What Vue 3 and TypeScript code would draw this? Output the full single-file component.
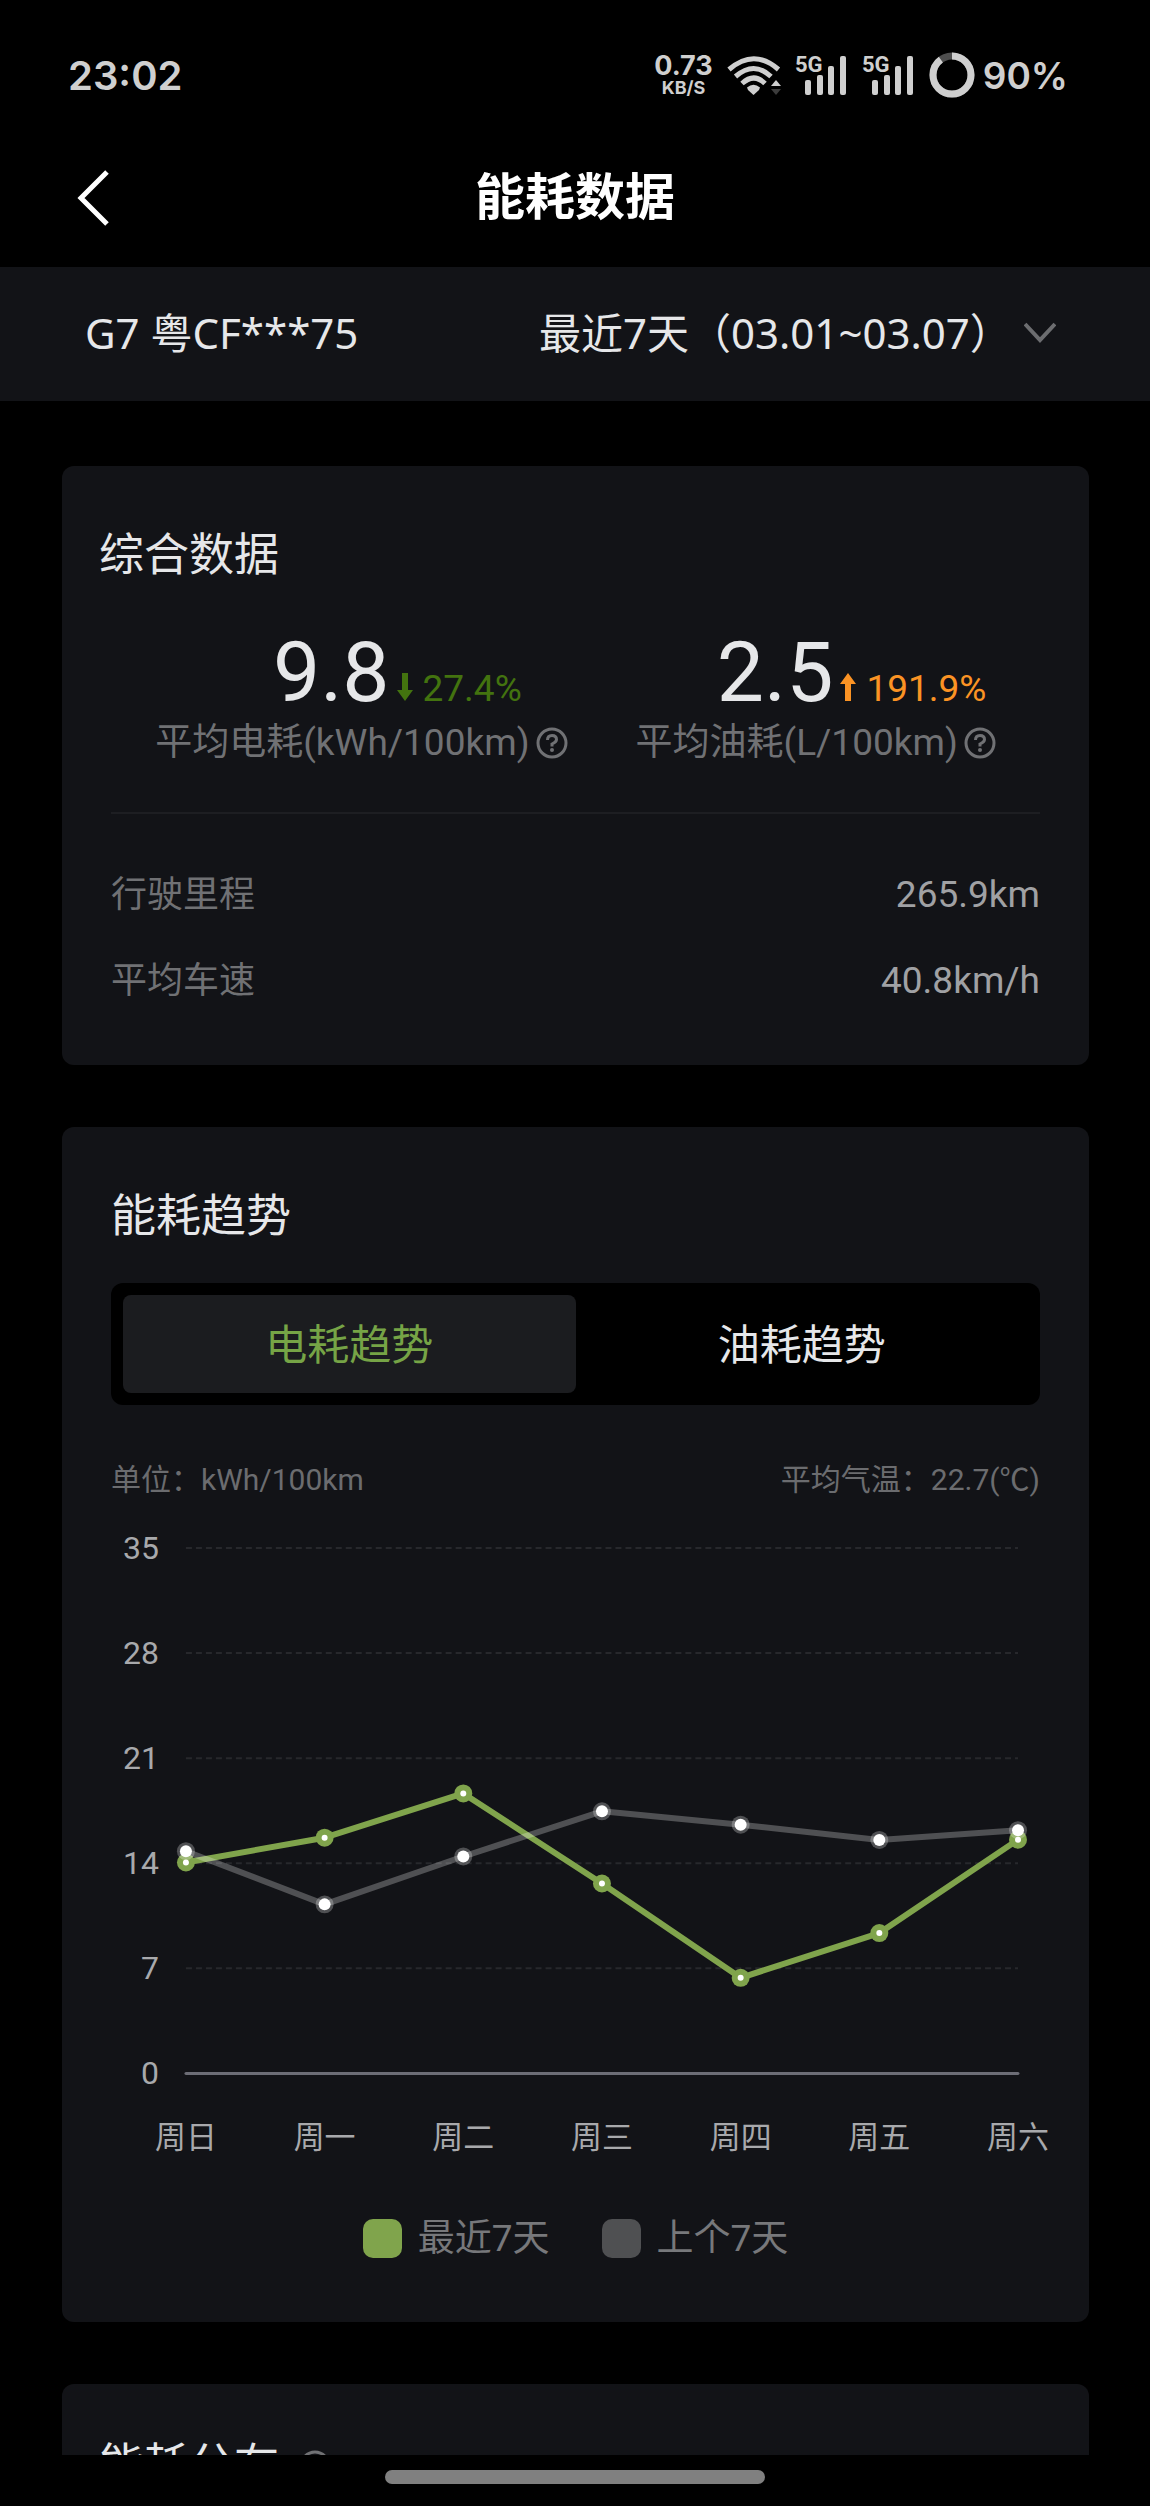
<script setup lang="ts">
import { computed, ref } from 'vue'

interface Series {
  name: string
  kind: 'current' | 'previous'
  values: number[]
}

const ranges = ['最近7天（03.01~03.07）']
const range = ref(ranges[0])

const metrics = [
  { value: '9.8', delta: '27.4%', trend: 'down', label: '平均电耗(kWh/100km)' },
  { value: '2.5', delta: '191.9%', trend: 'up', label: '平均油耗(L/100km)' },
]

const facts = [
  { label: '行驶里程', value: '265.9km' },
  { label: '平均车速', value: '40.8km/h' },
]

const tabs = ['电耗趋势', '油耗趋势']
const activeTab = ref(0)

const days = ['周日', '周一', '周二', '周三', '周四', '周五', '周六']
const ticks = [35, 28, 21, 14, 7, 0]
const series: Series[] = [
  { name: '最近7天', kind: 'current', values: [14.05, 15.7, 18.65, 12.65, 6.37, 9.35, 15.57] },
  { name: '上个7天', kind: 'previous', values: [14.8, 11.26, 14.45, 17.46, 16.57, 15.55, 16.2] },
]

const plot = { left: 75, right: 908, top: 18, bottom: 544, max: 35 }

const xAt = (i: number) => plot.left + ((plot.right - plot.left) * i) / (days.length - 1)
const yAt = (v: number) => plot.bottom - ((plot.bottom - plot.top) * v) / plot.max

const lines = computed(() =>
  series.map((s) => {
    const points = s.values.map((v, i) => ({ x: xAt(i), y: yAt(v) }))
    return { ...s, points, path: points.map((p) => `${p.x},${p.y}`).join(' ') }
  }),
)
</script>

<template>
  <div class="app">
    <div class="status">
      <span class="clock">23:02</span>
      <div class="indicators">
        <span class="speed"><b>0.73</b><small>KB/S</small></span>
        <svg class="wifi" width="54" height="40" viewBox="0 0 54 40" aria-hidden="true">
          <g fill="none" stroke="#cfcfcf" stroke-width="5">
            <path d="M2 14.5 Q27 -7 51.500 14.500" />
            <path d="M8.500 21.500 Q27 5.500 44 21.500" />
            <path d="M15 28.500 Q27 17.500 38 28.500" />
          </g>
          <path d="M20 32.500 Q26.500 27 33 32.500 L32 35 L26.500 40 L21 35 Z" fill="#cfcfcf" />
          <path d="M44 31 L49 25 L54 31 Z" fill="#cfcfcf" />
          <path d="M44 34 L54 34 L49 40 Z" fill="#3c3c3c" />
        </svg>
        <svg v-for="n in 2" :key="n" class="signal" width="52" height="40" viewBox="0 0 52 40" aria-hidden="true">
          <text x="0" y="17" class="net">5G</text>
          <g fill="#cfcfcf">
            <rect x="10" y="25" width="6" height="15" rx="2" />
            <rect x="22" y="20" width="6" height="20" rx="2" />
            <rect x="33" y="11" width="6" height="29" rx="2" />
            <rect x="45" y="1" width="6" height="39" rx="2" />
          </g>
        </svg>
        <svg class="ring" width="46" height="46" viewBox="0 0 46 46" aria-hidden="true">
          <circle cx="23" cy="23" r="19" fill="none" stroke="#4e4e4e" stroke-width="7" />
          <circle
            cx="23" cy="23" r="19" fill="none" stroke="#cfcfcf" stroke-width="7"
            pathLength="100" stroke-dasharray="90 10" transform="rotate(-90 23 23)"
          />
        </svg>
        <span class="battery">90%</span>
      </div>
    </div>

    <header class="nav">
      <button class="back" type="button" aria-label="返回">
        <svg width="36" height="56" viewBox="0 0 36 56" aria-hidden="true">
          <path d="M31 2 L5 28 L31 54" fill="none" stroke="#fff" stroke-width="5" />
        </svg>
      </button>
      <h1>能耗数据</h1>
    </header>

    <div class="filter">
      <span>G7 粤CF***75</span>
      <div class="range">
        <select v-model="range" aria-label="时间范围">
          <option v-for="r in ranges" :key="r">{{ r }}</option>
        </select>
        <svg width="32" height="22" viewBox="0 0 32 22" aria-hidden="true">
          <path d="M1 2 L16 18 L31 2" fill="none" stroke="#6c6d70" stroke-width="4" />
        </svg>
      </div>
    </div>

    <main class="content">
      <section class="card summary">
        <h2>综合数据</h2>
        <div class="metrics">
          <div v-for="m in metrics" :key="m.label" class="metric">
            <div class="figure">
              <span class="value">{{ m.value }}</span>
              <span class="delta" :class="m.trend">
                <svg width="16" height="28" viewBox="0 0 16 28" aria-hidden="true">
                  <path v-if="m.trend === 'down'" d="M5 0H11V17H16L8 28L0 17H5Z" fill="currentColor" />
                  <path v-else d="M5 28H11V11H16L8 0L0 11H5Z" fill="currentColor" />
                </svg>
                {{ m.delta }}
              </span>
            </div>
            <div class="caption">
              <span>{{ m.label }}</span>
              <button class="help" type="button" aria-label="说明">
                <svg width="32" height="32" viewBox="0 0 32 32" aria-hidden="true">
                  <circle cx="16" cy="16" r="14" fill="none" stroke="currentColor" stroke-width="3" />
                  <path d="M11.500 13 Q11.500 8.500 16 8.500 Q20.500 8.500 20.500 12.500 Q20.500 15 16 17 V19.500" fill="none" stroke="currentColor" stroke-width="3" />
                  <circle cx="16" cy="23" r="2" fill="currentColor" />
                </svg>
              </button>
            </div>
          </div>
        </div>
        <dl class="facts">
          <div v-for="f in facts" :key="f.label">
            <dt>{{ f.label }}</dt>
            <dd>{{ f.value }}</dd>
          </div>
        </dl>
      </section>

      <section class="card trend">
        <h2>能耗趋势</h2>
        <div class="tabs" role="tablist">
          <button
            v-for="(t, i) in tabs" :key="t" type="button" role="tab"
            :aria-selected="activeTab === i" :class="{ active: activeTab === i }"
            @click="activeTab = i"
          >{{ t }}</button>
        </div>
        <div class="meta">
          <span>单位：kWh/100km</span>
          <span>平均气温：22.7(℃)</span>
        </div>
        <svg class="chart" viewBox="0 0 930 640" role="img" aria-label="电耗趋势">
          <g v-for="t in ticks" :key="t">
            <text class="axis tick" x="48" :y="yAt(t) + 11">{{ t }}</text>
            <line
              :class="t === 0 ? 'base' : 'grid'"
              :x1="plot.left" :x2="plot.right" :y1="yAt(t)" :y2="yAt(t)"
            />
          </g>
          <g v-for="l in lines" :key="l.name" :class="l.kind">
            <polyline :points="l.path" />
            <template v-for="(p, i) in l.points" :key="i">
              <circle class="halo" :cx="p.x" :cy="p.y" r="9" />
              <circle class="dot" :cx="p.x" :cy="p.y" />
            </template>
          </g>
          <text v-for="(d, i) in days" :key="d" class="axis day" :x="xAt(i)" y="619">{{ d }}</text>
        </svg>
        <ul class="legend">
          <li v-for="s in series" :key="s.name">
            <i :class="s.kind"></i><span>{{ s.name }}</span>
          </li>
        </ul>
      </section>

      <section class="card split">
        <h2>
          能耗分布
          <button class="help" type="button" aria-label="说明">
            <svg width="32" height="32" viewBox="0 0 32 32" aria-hidden="true">
              <circle cx="16" cy="16" r="14" fill="none" stroke="currentColor" stroke-width="3" />
              <path d="M11.500 13 Q11.500 8.500 16 8.500 Q20.500 8.500 20.500 12.500 Q20.500 15 16 17 V19.500" fill="none" stroke="currentColor" stroke-width="3" />
              <circle cx="16" cy="23" r="2" fill="currentColor" />
            </svg>
          </button>
        </h2>
      </section>
    </main>

    <footer class="home"><span></span></footer>
  </div>
</template>

<style>
body {
  margin: 0;
  background: #000;
}
</style>

<style scoped>
.app {
  display: flex;
  flex-direction: column;
  height: 100vh;
  background: #000;
  color: #e6e7e9;
  font-family: Roboto, "Noto Sans CJK SC", sans-serif;
}

button,
select {
  margin: 0;
  padding: 0;
  border: 0;
  background: none;
  color: inherit;
  font: inherit;
  appearance: none;
}

h1,
h2,
dl,
dd,
ul {
  margin: 0;
  padding: 0;
}

svg {
  display: block;
}

/* Status bar */
.status {
  display: flex;
  flex: none;
  align-items: center;
  justify-content: space-between;
  box-sizing: border-box;
  height: 128px;
  padding: 22px 82px 0 68px;
  color: #cfcfcf;
  font-family: Inter, Roboto, sans-serif;
  font-weight: 600;
}

.clock {
  font-size: 40px;
}

.indicators {
  display: flex;
  align-items: center;
}

.speed {
  display: flex;
  flex-direction: column;
  align-items: center;
  margin-right: 14px;
}

.speed b {
  font-size: 27px;
  font-weight: 700;
  line-height: 26px;
}

.speed small {
  font-size: 18px;
  font-weight: 700;
  line-height: 18px;
}

.wifi {
  margin-right: 14px;
}

.signal {
  margin-right: 15px;
  overflow: visible;
}

.net {
  fill: #cfcfcf;
  font-family: Roboto, sans-serif;
  font-size: 22px;
  font-weight: 700;
}

.ring {
  margin-right: 8px;
}

.battery {
  font-size: 37px;
}

/* Title bar */
.nav {
  display: grid;
  grid-template-columns: 1fr auto 1fr;
  flex: none;
  align-items: center;
  height: 139px;
  padding: 0 76px;
}

.nav h1 {
  color: #fff;
  font-size: 50px;
  font-weight: 700;
  line-height: 60px;
}

.back {
  justify-self: start;
}

/* Vehicle and date range */
.filter {
  display: flex;
  flex: none;
  align-items: center;
  justify-content: space-between;
  box-sizing: border-box;
  height: 134px;
  padding: 0 94px 2px 85px;
  background: #121317;
  font-family: "Noto Sans", "Noto Sans CJK SC", sans-serif;
  font-size: 42px;
  line-height: 60px;
}

.range {
  display: flex;
  align-items: center;
  gap: 12px;
}

/* Cards */
.content {
  flex: 1;
  min-height: 0;
  padding: 65px 61px 0 62px;
  overflow-y: auto;
  scrollbar-width: none;
}

.card {
  margin-bottom: 62px;
  border-radius: 12px;
  background: #121317;
}

.card h2 {
  font-size: 45px;
  font-weight: 400;
  line-height: 60px;
}

.summary {
  padding: 60px 49px 41px;
}

.summary h2 {
  margin-left: -12px;
}

.metrics {
  display: flex;
  justify-content: center;
  gap: 68px;
  padding: 39px 0 47px;
  border-bottom: 2px solid #1d1e22;
}

.figure {
  display: flex;
  align-items: baseline;
  justify-content: center;
  gap: 7px;
  padding-left: 72px;
  line-height: 96px;
}

.value {
  font-size: 84px;
}

.delta {
  display: flex;
  align-items: baseline;
  gap: 10px;
  font-size: 37px;
  line-height: 44px;
}

.down {
  color: #43730f;
}

.up {
  color: #fb9324;
}

.caption {
  display: flex;
  align-items: center;
  gap: 6px;
  color: #707174;
  font-size: 37px;
  line-height: 44px;
}

.help {
  color: #707174;
}

.facts {
  padding-top: 38px;
}

.facts div {
  display: flex;
  justify-content: space-between;
  font-size: 37px;
  line-height: 86px;
}

.facts dt {
  color: #707174;
  font-size: 36px;
}

.facts dd {
  color: #a0a1a4;
}

/* Trend */
.trend {
  padding: 60px 49px 64px;
}

.tabs {
  display: grid;
  grid-template-columns: 1fr 1fr;
  margin-top: 36px;
  padding: 12px;
  border-radius: 12px;
  background: #000;
}

.tabs button {
  height: 98px;
  padding-bottom: 6px;
  border-radius: 8px;
  font-size: 42px;
}

.tabs .active {
  background: #1b1c1f;
  color: #76a446;
}

.meta {
  display: flex;
  justify-content: space-between;
  margin-top: 55px;
  color: #6b6c6f;
  font-size: 30px;
  line-height: 40px;
}

.chart {
  width: 100%;
  margin-top: 30px;
  overflow: visible;
}

.axis {
  fill: #a8a9ac;
}

.tick {
  font-size: 32px;
  text-anchor: end;
}

.day {
  font-size: 31px;
  text-anchor: middle;
}

.grid {
  stroke: #27282c;
  stroke-width: 2;
  stroke-dasharray: 6 4;
}

.base {
  stroke: #6c6d76;
  stroke-width: 3;
  stroke-linecap: round;
}

.chart polyline {
  fill: none;
  stroke-width: 6;
  stroke-linejoin: round;
}

.chart .current polyline {
  stroke: #80a44c;
}

.chart .current .halo {
  fill: #80a44c;
}

.chart .dot {
  fill: #fff;
  r: 3px;
}

.chart .previous polyline {
  stroke: rgba(255, 255, 255, 0.26);
}

.chart .previous .halo {
  fill: rgba(255, 255, 255, 0.26);
}

.chart .previous .dot {
  r: 6px;
}

.legend {
  display: flex;
  justify-content: center;
  gap: 52px;
  margin-top: 50px;
  color: #77787b;
  font-size: 37px;
  line-height: 39px;
  list-style: none;
}

.legend li {
  display: flex;
  align-items: center;
  gap: 16px;
}

.legend i {
  width: 39px;
  height: 39px;
  border-radius: 10px;
}

.legend .current {
  background: #80a44c;
}

.legend .previous {
  background: #4f5052;
}

.split {
  padding: 52px 37px;
}

.split h2 {
  display: flex;
  align-items: center;
  gap: 20px;
}

/* Gesture bar */
.home {
  display: flex;
  flex: none;
  align-items: flex-start;
  justify-content: center;
  box-sizing: border-box;
  height: 51px;
  padding-top: 15px;
}

.home span {
  width: 33%;
  height: 14px;
  border-radius: 7px;
  background: #808080;
}
</style>
